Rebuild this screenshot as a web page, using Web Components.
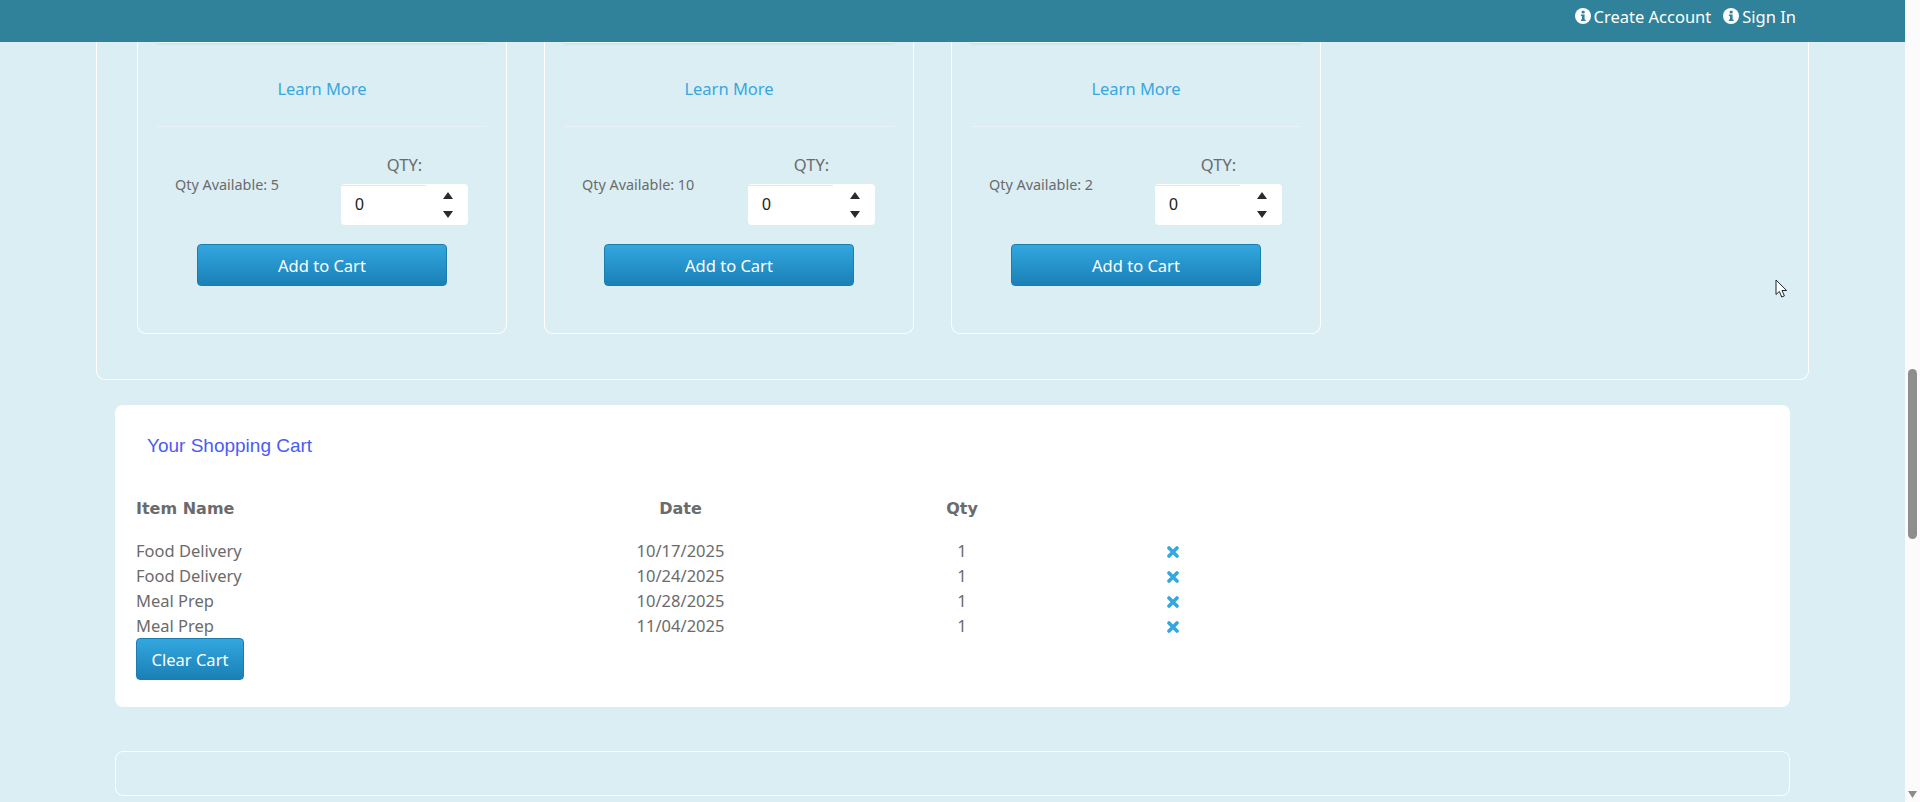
<!DOCTYPE html>
<html>
<head>
<meta charset="utf-8">
<title>Shopping Cart</title>
<style>
  html, body { margin: 0; height: 100%; overflow: hidden; }
  body { background: #daeef4; font-family: "Noto Sans", "Open Sans", sans-serif; color: #6b6b6b; }
</style>
</head>
<body>
<shop-app>
  <site-header slot="header"></site-header>
  <outer-panel>
    <product-card available="5"></product-card>
    <product-card available="10"></product-card>
    <product-card available="2"></product-card>
  </outer-panel>
  <shopping-cart>
    <cart-row name="Food Delivery" date="10/17/2025" qty="1"></cart-row>
    <cart-row name="Food Delivery" date="10/24/2025" qty="1"></cart-row>
    <cart-row name="Meal Prep" date="10/28/2025" qty="1"></cart-row>
    <cart-row name="Meal Prep" date="11/04/2025" qty="1"></cart-row>
  </shopping-cart>
  <empty-panel></empty-panel>
</shop-app>

<script>
// small helper so every component is set up the same way
function define_component(tag, html, setup) {
  const template = document.createElement('template');
  template.innerHTML = html;
  customElements.define(tag, class extends HTMLElement {
    constructor() {
      super();
      this.attachShadow({mode: 'open'});
      this.shadowRoot.appendChild(template.content.cloneNode(true));
    }
    connectedCallback() {
      if (setup) setup(this, this.shadowRoot);
    }
  });
}

define_component('shop-app', `
  <style>
    :host { display: grid; grid-template-columns: 1fr 15px; height: 802px; overflow: hidden; position: relative; }
    #page { display: flex; flex-direction: column; min-width: 0; height: 802px; overflow: hidden; }
    #cursor { position: absolute; left: 1775px; top: 279px; }
  </style>
  <div id="page">
    <slot name="header"></slot>
    <slot></slot>
  </div>
  <page-scrollbar></page-scrollbar>
  <svg id="cursor" width="13" height="20" viewBox="0 0 13 20">
    <path d="M1 1v14.5l3.4-3.1 2.3 5.6 2.7-1.1-2.4-5.4h4.6z" fill="#fff" stroke="#1c2530" stroke-width="1" stroke-linejoin="round"/>
  </svg>
`);

define_component('page-scrollbar', `
  <style>
    :host { display: block; background: #fbfbfb; position: relative; height: 802px; }
    #thumb { position: absolute; left: 3px; top: 369px; width: 9px; height: 170px; border-radius: 5px; background: #8e8e8e; }
    #down { position: absolute; left: 3px; top: 791px; }
  </style>
  <div id="thumb"></div>
  <svg id="down" width="9" height="7" viewBox="0 0 9 7"><path d="M0 0h9L4.5 7z" fill="#8a8a8a"/></svg>
`);

const info_icon = `
  <svg width="16" height="16" viewBox="0 0 16 16">
    <circle cx="8" cy="8" r="8" fill="#fff"/>
    <rect x="6.7" y="2.8" width="2.9" height="2.6" fill="#2f8299"/>
    <path d="M5.9 6.5h3.7v5h1v1.6H5.9v-1.6h1v-3.4h-1z" fill="#2f8299"/>
  </svg>`;

define_component('site-header', `
  <style>
    :host { display: flex; flex: none; height: 42px; background: #2f8299; color: #fff; justify-content: flex-end; align-items: flex-start; padding-right: 109px; font-size: 16.5px; }
    a { display: flex; align-items: center; gap: 3px; height: 32px; margin-left: 12px; }
  </style>
  <a>${info_icon}<span>Create Account</span></a>
  <a>${info_icon}<span>Sign In</span></a>
`);

define_component('outer-panel', `
  <style>
    :host { display: flex; flex: none; gap: 37px; margin: 0 96px 25px 96px; padding: 0 40px 45px; border: 1px solid #fff; border-top: 0; border-radius: 0 0 9px 9px; }
  </style>
  <slot></slot>
`);

define_component('blue-button', `
  <style>
    :host { display: flex; align-items: center; justify-content: center; box-sizing: border-box; height: 42px; background: linear-gradient(#33a7df, #1a80b6); border: 1px solid #1b7cae; border-radius: 4px; color: #fff; font-size: 16.5px; }
  </style>
  <slot></slot>
`);

define_component('qty-input', `
  <style>
    :host { display: flex; align-items: center; justify-content: space-between; box-sizing: border-box; width: 127px; height: 41px; background: #fff; border-radius: 4px; padding: 0 15px 0 15px; color: #222; font: 16px "Liberation Sans", sans-serif; position: relative; }
    #shade { position: absolute; left: 1px; top: 1px; width: 84px; height: 1px; background: #e6e6e6; }
    #arrows { display: flex; flex-direction: column; gap: 12px; }
    svg { display: block; }
    span { margin-left: -1px; }
  </style>
  <div id="shade"></div>
  <span>0</span>
  <div id="arrows">
    <svg width="10" height="7" viewBox="0 0 10 7"><path d="M5 0l5 7H0z" fill="#2b2b2b"/></svg>
    <svg width="10" height="7" viewBox="0 0 10 7"><path d="M0 0h10L5 7z" fill="#2b2b2b"/></svg>
  </div>
`);

define_component('product-card', `
  <style>
    :host { display: block; box-sizing: border-box; width: 370px; padding: 0 19px 47px; border: 1px solid #fff; border-top: 0; border-radius: 0 0 9px 9px; }
    #top { height: 1px; background: #eef5f7; box-shadow: 0 1px 2px rgba(120,140,150,.25); border-radius: 0 0 4px 4px; }
    #learn { box-sizing: border-box; height: 83px; padding-top: 7px; display: flex; align-items: center; justify-content: center; color: #38a7e0; font-size: 16.5px; }
    hr { margin: 0; border: 0; height: 1px; background: #e6f2f6; }
    #qty-row { display: flex; justify-content: space-between; padding: 28px 19px 0 18px; }
    #available { font-size: 14.4px; line-height: 20px; margin-top: 20px; }
    #qty-label { text-align: center; font-size: 16.5px; line-height: 20px; margin-bottom: 9px; }
    blue-button { width: 250px; margin: 19px auto 0; }
  </style>
  <div id="top"></div>
  <div id="learn">Learn More</div>
  <hr>
  <div id="qty-row">
    <div id="available"></div>
    <div>
      <div id="qty-label">QTY:</div>
      <qty-input></qty-input>
    </div>
  </div>
  <blue-button>Add to Cart</blue-button>
`, (el, root) => {
  root.querySelector('#available').textContent = 'Qty Available: ' + el.getAttribute('available');
});

const row_columns = '450px 189px 374px 48px';

define_component('shopping-cart', `
  <style>
    :host { display: block; flex: none; margin: 0 115px 44px 115px; padding: 30px 21px 27px; background: #fff; border-radius: 8px; }
    h2 { margin: 0 0 0 11px; font: 400 19px/22px "Liberation Sans", sans-serif; color: #4a5cf4; }
    #head { display: grid; grid-template-columns: ${row_columns}; height: 25px; line-height: 25px; margin: 39px 0 17px; font-weight: 700; font-family: "DejaVu Sans", sans-serif; font-size: 16px; }
    #head div + div { text-align: center; }
    blue-button { width: 108px; }
  </style>
  <h2>Your Shopping Cart</h2>
  <div id="head"><div>Item Name</div><div>Date</div><div>Qty</div><div></div></div>
  <slot></slot>
  <blue-button>Clear Cart</blue-button>
`);

define_component('cart-row', `
  <style>
    :host { display: grid; grid-template-columns: ${row_columns}; height: 25px; line-height: 25px; font-size: 16.5px; }
    .c { text-align: center; }
    svg { vertical-align: -1px; }
  </style>
  <div id="name"></div>
  <div id="date" class="c"></div>
  <div id="qty" class="c"></div>
  <div class="c">
    <svg width="12" height="12" viewBox="0 0 12 12"><path d="M2 2l8 8M10 2l-8 8" stroke="#35a7e0" stroke-width="3.6" stroke-linecap="round"/></svg>
  </div>
`, (el, root) => {
  root.querySelector('#name').textContent = el.getAttribute('name');
  root.querySelector('#date').textContent = el.getAttribute('date');
  root.querySelector('#qty').textContent = el.getAttribute('qty');
});

define_component('empty-panel', `
  <style>
    :host { display: block; flex: none; box-sizing: border-box; height: 45px; margin: 0 115px; border: 1px solid #fff; border-radius: 8px; }
  </style>
`);
</script>
</body>
</html>
